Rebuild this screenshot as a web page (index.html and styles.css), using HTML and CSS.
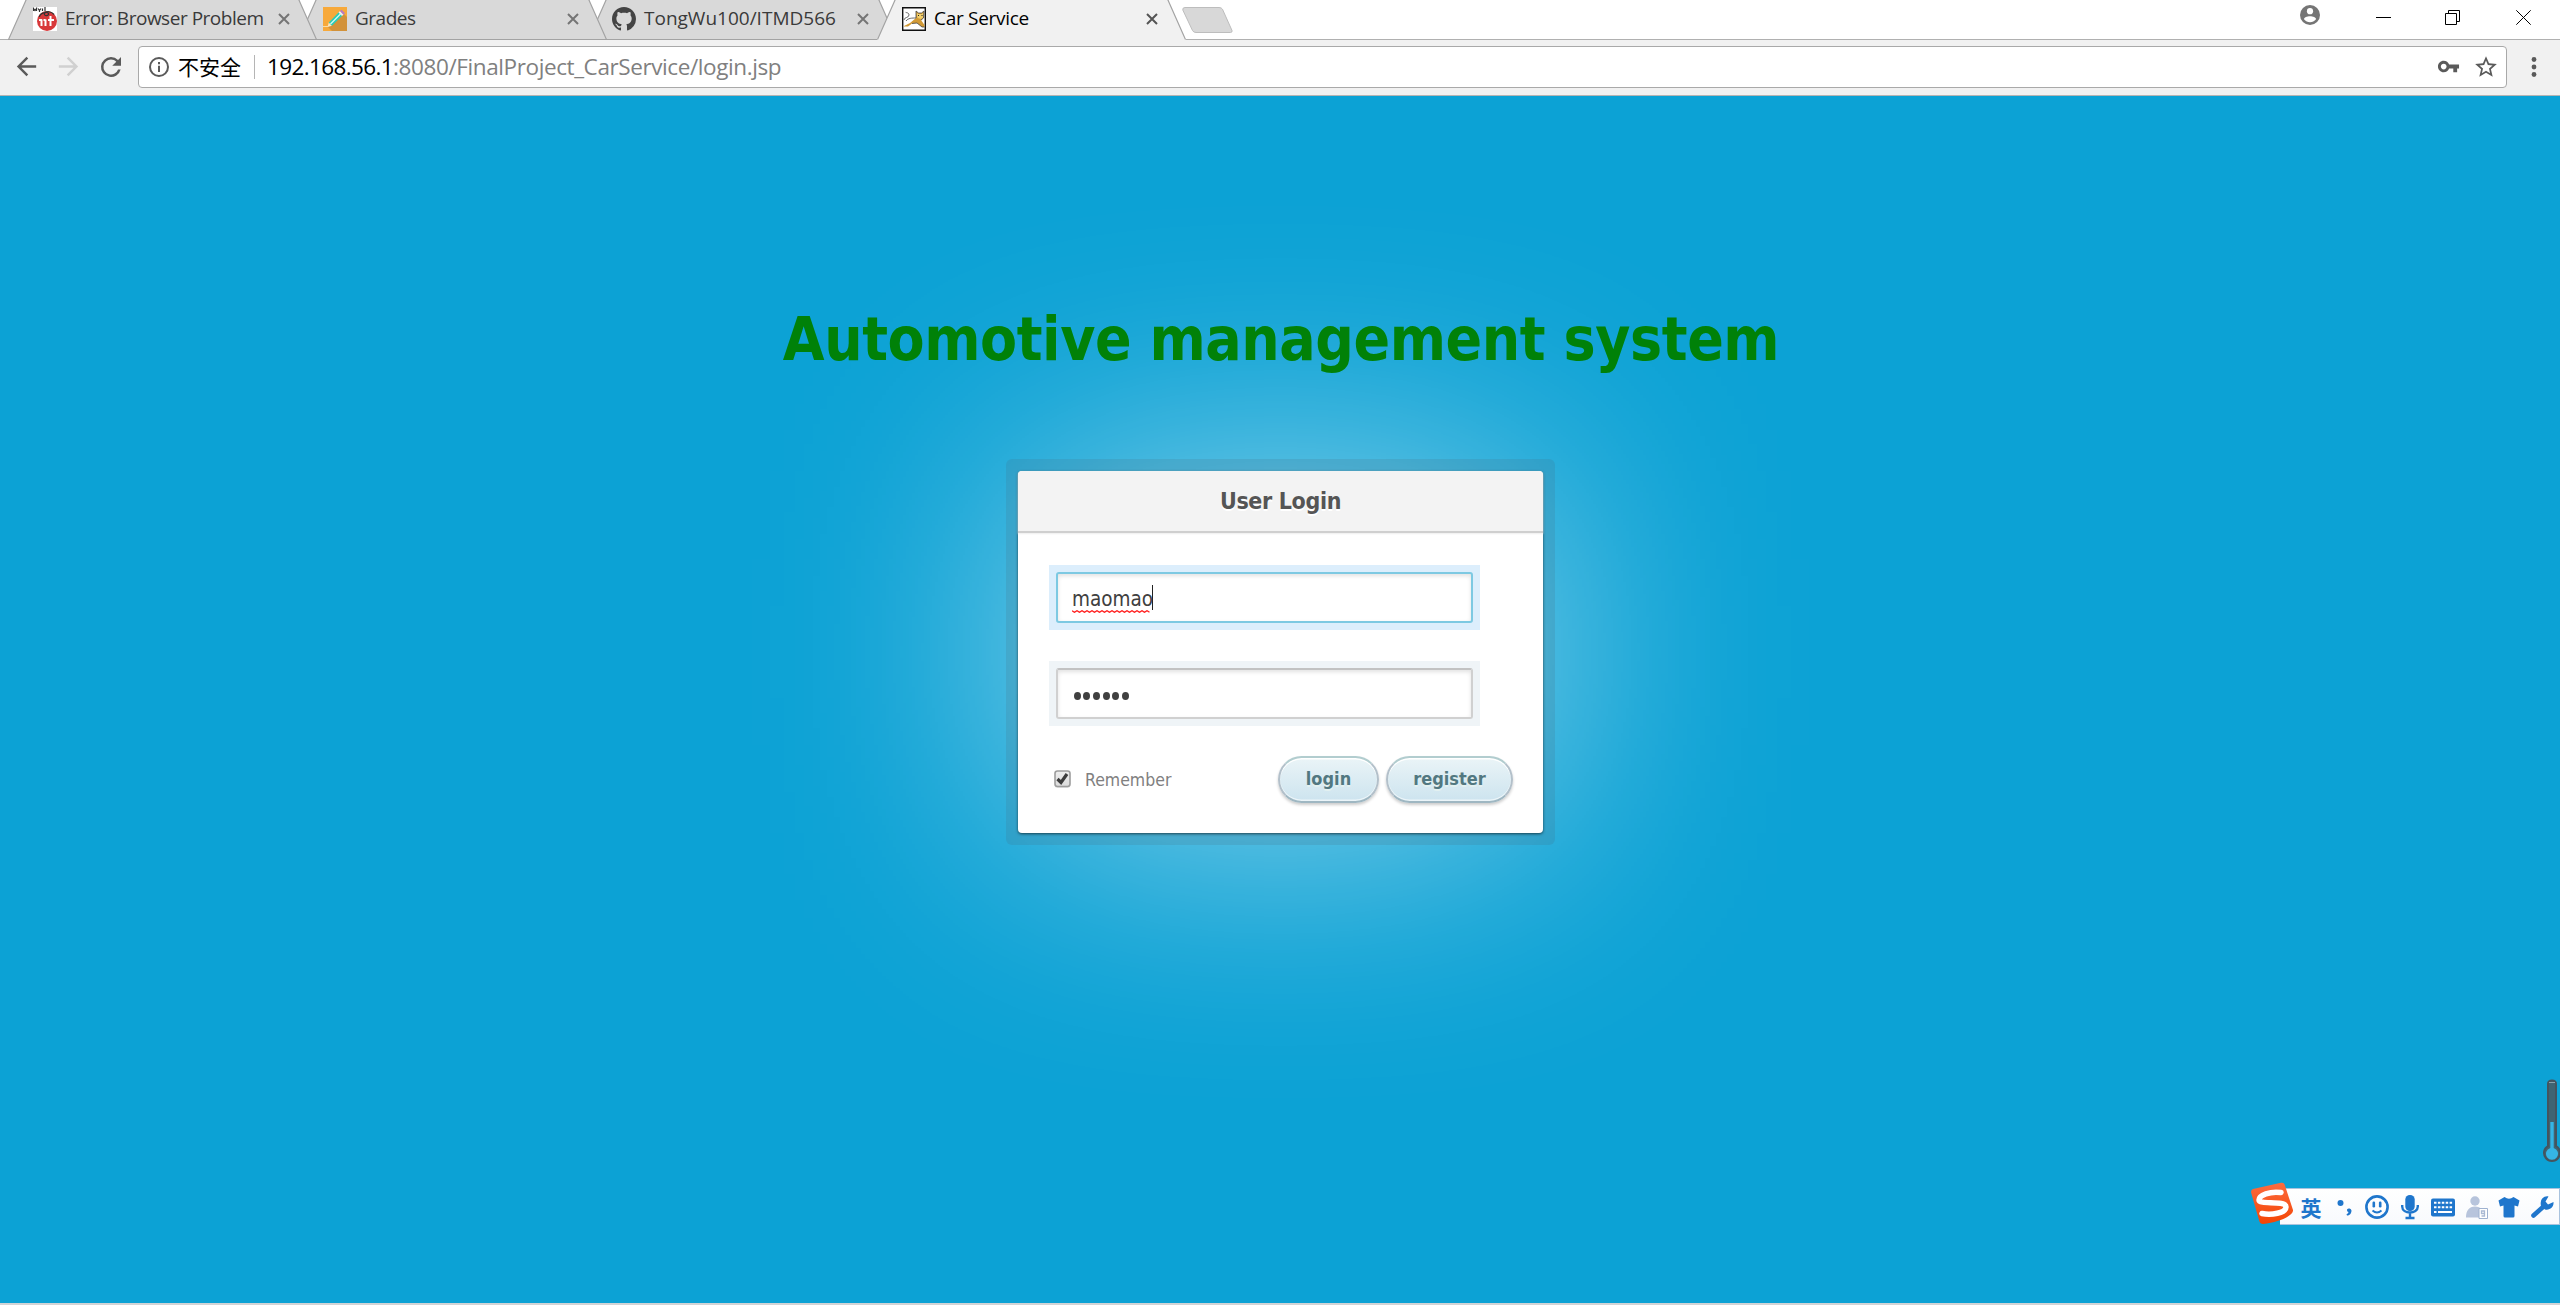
FILE: index.html
```html
<!DOCTYPE html>
<html lang="en">
<head>
<meta charset="utf-8">
<title>Car Service</title>
<link rel="stylesheet" href="styles.css">
</head>
<body>
<header class="tabstrip">
  <div class="tab tab-1">
    <svg class="shape" width="309" height="40" viewBox="0 0 309 40"><path d="M0.500 39.500L18.500 -1H290.500L308.500 39.500Z"/></svg>
    <svg class="favicon" width="24" height="24" viewBox="0 0 24 24"><path fill="#fff" d="M0 0h24v24H0z"/><circle cx="14" cy="14" r="10" fill="#d8383a"/><path fill="none" stroke="#fff" stroke-width="2" d="M8.500 12.500v6.500M12.500 12.500v6.500M17.500 9v10M6 13h3M10.500 13h2M15 13h6"/><path fill="none" stroke="#333" stroke-width="1.200" d="M.5 4V1.500l1.500 2 1.500-2V4M5 1.500l1.500 2L8 1.500M6.500 3.500V5M9.500 1.500v2.500M12 0v4.500M6.500 10c0-4 8-6 9-3.500s-5 3-4 0c2-3 7-2 9.500 1"/></svg>
    <span class="label">Error: Browser Problem</span>
    <svg class="close" width="14" height="14" viewBox="0 0 14 14"><path d="M2 2l10 10M12 2L2 12"/></svg>
  </div>
  <div class="tab tab-2">
    <svg class="shape" width="309" height="40" viewBox="0 0 309 40"><path d="M0.500 39.500L18.500 -1H290.500L308.500 39.500Z"/></svg>
    <svg class="favicon" width="24" height="24" viewBox="0 0 24 24"><path fill="#f7a93b" d="M0 0h24v24H0z"/><path fill="#d2923a" d="M21 7l3 3v14H9l-4-4z"/><path fill="#fbe6c0" d="M4.500 20l1.300-4.500 3.200 3.200z"/><path fill="#27cdb9" d="M5.800 15.500L16 5l3.500 3.500L9 18.700z"/><path stroke="#d9f8f2" stroke-width="1.300" d="M7.500 17L17.500 7"/><path fill="#eee" d="M15.500 5.500L17 4l3.500 3.500L19 9z"/><path fill="#b678c8" d="M17 4l1.500-1.200 3.500 3.400-1.500 1.500z"/><path stroke="#f9dca6" stroke-width="1" d="M0 19.500h5"/></svg>
    <span class="label">Grades</span>
    <svg class="close" width="14" height="14" viewBox="0 0 14 14"><path d="M2 2l10 10M12 2L2 12"/></svg>
  </div>
  <div class="tab tab-3">
    <svg class="shape" width="309" height="40" viewBox="0 0 309 40"><path d="M0.500 39.500L18.500 -1H290.500L308.500 39.500Z"/></svg>
    <svg class="favicon" width="24" height="24" viewBox="0 0 16 16"><path fill="#444" d="M8 0C3.580 0 0 3.580 0 8c0 3.540 2.290 6.530 5.470 7.590.4.070.55-.17.55-.38 0-.19-.01-.82-.01-1.490-2.010.37-2.530-.49-2.690-.94-.09-.23-.48-.94-.82-1.130-.28-.15-.68-.52-.01-.53.63-.01 1.080.58 1.230.82.72 1.210 1.870.87 2.330.66.07-.52.28-.87.51-1.070-1.780-.2-3.640-.89-3.640-3.950 0-.87.31-1.590.82-2.150-.08-.2-.36-1.020.08-2.120 0 0 .67-.21 2.200.82.64-.18 1.320-.27 2-.27s1.360.09 2 .27c1.530-1.040 2.200-.82 2.200-.82.44 1.100.16 1.920.08 2.120.51.56.82 1.270.82 2.150 0 3.070-1.870 3.750-3.650 3.950.29.25.54.73.54 1.480 0 1.070-.01 1.930-.01 2.200 0 .21.15.46.55.38A8.010 8.010 0 0 0 16 8c0-4.420-3.580-8-8-8z"/></svg>
    <span class="label">TongWu100/ITMD566</span>
    <svg class="close" width="14" height="14" viewBox="0 0 14 14"><path d="M2 2l10 10M12 2L2 12"/></svg>
  </div>
  <div class="tab tab-4 active">
    <svg class="shape" width="309" height="40" viewBox="0 0 309 40"><path class="fill" d="M0 40L18.500 -1H290.500L309 40Z"/><path class="edge" d="M0.500 39.500L18.500 -1M290.500 -1L308.500 39.500"/></svg>
    <svg class="favicon" width="24" height="24" viewBox="0 0 24 24"><path fill="#fff" stroke="#111" stroke-width="1.400" d="M.7.700h22.600v22.600H.7z"/><path fill="#d29a36" d="M2 19l6-3 6-5V4l2.500 2h3L22 4l-.5 7-2.500 2 3.500 5v2H20l-5-4-5 .500-4 3H2z"/><path fill="#f3cf6a" d="M14.500 6l2 1h3l2-1v4l-2.500 2-3.500-1z"/><path fill="none" stroke="#444" stroke-width=".8" d="M2 13c0-3 5-2 5-5S3 6 4 5M4 14c2-3 6-3 10-3V4l2.500 2h3L22 4l-.5 7-2.500 2M10 16.500l5-.500 5 4h2.500"/><path fill="#222" d="M16 8h1v1h-1zM19.500 8h1v1h-1z"/></svg>
    <span class="label">Car Service</span>
    <svg class="close" width="14" height="14" viewBox="0 0 14 14"><path d="M2 2l10 10M12 2L2 12"/></svg>
  </div>
  <svg class="newtab" width="56" height="30" viewBox="0 0 56 30"><path fill="#d8d8d8" stroke="#bdbdbd" d="M3 2.500H37Q39.500 2.500 40.500 4.300L50 25.500Q50.500 27.500 48.500 27.500H14Q11.500 27.500 10.500 25.500L.8 5Q.4 2.500 3 2.500Z"/></svg>
  <div class="window-controls">
    <svg width="22" height="22" viewBox="0 0 22 22"><circle cx="11" cy="11" r="10" fill="#757575"/><circle cx="11" cy="7.200" r="3.100" fill="#fff"/><path fill="#fff" d="M5 15.200c0-4 12-4 12 0-3 4-9 4-12 0z"/></svg>
    <svg width="15" height="15" viewBox="0 0 15 15"><path d="M0 7.500h15"/></svg>
    <svg width="15" height="15" viewBox="0 0 15 15"><path d="M.5 3.500h11v11H.5zM3.500 3V.5h11v11H12"/></svg>
    <svg width="15" height="15" viewBox="0 0 15 15"><path d="M.3.300l14.400 14.400M14.700.300L.3 14.700"/></svg>
  </div>
</header>
<nav class="toolbar">
  <svg class="nav" width="29" height="29" viewBox="0 0 24 24"><path d="M20 11H7.830l5.590-5.590L12 4l-8 8 8 8 1.410-1.410L7.830 13H20v-2z"/></svg>
  <svg class="nav disabled" width="29" height="29" viewBox="0 0 24 24"><path d="M12 4l-1.410 1.410L16.170 11H4v2h12.170l-5.580 5.590L12 20l8-8z"/></svg>
  <svg class="nav" width="30" height="30" viewBox="0 0 24 24"><path d="M17.650 6.350A7.960 7.960 0 0 0 12 4a8 8 0 1 0 7.730 10h-2.080A6 6 0 1 1 12 6c1.660 0 3.140.69 4.220 1.780L13 11h7V4l-2.350 2.350z"/></svg>
  <div class="omnibox">
    <svg class="info" width="22" height="22" viewBox="0 0 22 22"><circle cx="11" cy="11" r="9" fill="none" stroke="#5a5a5a" stroke-width="2"/><path fill="#5a5a5a" d="M10 6h2v2.200h-2zM10 9.800h2V16h-2z"/></svg>
    <span class="insecure">不安全</span>
    <span class="divider"></span>
    <span class="url"><span class="host">192.168.56.1</span><span class="path">:8080/FinalProject_CarService/login.jsp</span></span>
    <svg class="key" width="23" height="23" viewBox="0 0 24 24"><path d="M12.650 10C11.830 7.670 9.610 6 7 6c-3.310 0-6 2.690-6 6s2.690 6 6 6c2.610 0 4.830-1.670 5.650-4H17v4h4v-4h2v-4H12.650zM7 15c-1.650 0-3-1.350-3-3s1.350-3 3-3 3 1.350 3 3-1.350 3-3 3z"/></svg>
    <svg class="star" width="26" height="26" viewBox="0 0 24 24"><path d="M22 9.240l-7.190-.62L12 2 9.190 8.630 2 9.240l5.460 4.730L5.820 21 12 17.270 18.180 21l-1.630-7.030L22 9.240zM12 15.400l-3.760 2.270 1-4.280-3.320-2.880 4.380-.38L12 6.100l1.710 4.040 4.380.38-3.320 2.880 1 4.280L12 15.400z"/></svg>
  </div>
  <svg class="menu" width="6" height="22" viewBox="0 0 6 22"><circle cx="3" cy="3.500" r="2.400"/><circle cx="3" cy="11" r="2.400"/><circle cx="3" cy="18.500" r="2.400"/></svg>
</nav>
<main class="page">
  <h1>Automotive management system</h1>
  <form class="login-frame">
    <div class="login-card">
      <h2>User Login</h2>
      <div class="fields">
        <div class="ring focused"><div class="field"><span class="typed">maomao<svg class="squiggle" width="80" height="3" viewBox="0 0 80 3"><path d="M0 .7l2.500 1.600 2.500-1.600 2.500 1.600 2.500-1.600 2.500 1.600 2.500-1.600 2.500 1.600 2.500-1.600 2.500 1.600 2.500-1.600 2.500 1.600 2.500-1.600 2.500 1.600 2.500-1.600 2.500 1.600 2.500-1.600 2.500 1.600 2.500-1.600 2.500 1.600 2.500-1.600 2.500 1.600 2.500-1.600 2.500 1.600 2.500-1.600 2.500 1.600 2.500-1.600 2.500 1.600 2.500-1.600 2.500 1.600 2.500-1.600 2.500 1.600"/></svg></span><span class="caret"></span></div></div>
        <div class="ring"><div class="field"><span class="dot"></span><span class="dot"></span><span class="dot"></span><span class="dot"></span><span class="dot"></span><span class="dot"></span></div></div>
      </div>
      <div class="actions">
        <svg class="check" width="17" height="19" viewBox="0 0 17 19"><defs><linearGradient id="box" x2="0" y2="1"><stop stop-color="#eee"/><stop offset="1" stop-color="#dcdcdc"/></linearGradient></defs><rect x="1" y="2" width="15" height="16" rx="2.500" fill="#ccc" opacity=".5"/><rect x="1" y="1" width="15" height="15.500" rx="2.500" fill="url(#box)" stroke="#9d9d9d" stroke-width="1.600"/><path fill="none" stroke="#3d3d3d" stroke-width="3.200" d="M3.500 9l3.500 3.500L13 4"/></svg>
        <span class="remember">Remember</span>
        <button type="button" class="btn login">login</button>
        <button type="button" class="btn register">register</button>
      </div>
    </div>
  </form>
</main>
<footer class="edge-line"></footer>

<svg class="thermo" width="18" height="86" viewBox="0 0 18 86"><path fill="#3f6472" stroke="#45545e" stroke-width="2" d="M6 5q0-3.500 4-3.500t4 3.500V67a8 8 0 1 1-8 0z"/><path fill="#35b5e5" d="M8.300 43h3.400v26a6 6 0 1 1-3.400 0z"/><path stroke="#8ba3ad" d="M7 3.500h6"/></svg>

<div class="ime">
  <svg class="sogou" width="44" height="43" viewBox="0 0 44 43"><defs><linearGradient id="og" x2="0" y2="1"><stop stop-color="#fc6c40"/><stop offset="1" stop-color="#f44504"/></linearGradient></defs><path fill="url(#og)" d="M3 7L31 .8q3-.6 3.700 2L43 28c1 5-12 12-30 14q-3 0-3.700-3L1.200 11Q.5 8 3 7z"/><path fill="none" stroke="#fff" stroke-width="5.500" stroke-linecap="round" d="M31 10.500C20 9 9 13 9 18c0 5 27 0 27 7 0 6-15 8.500-24 6.500"/></svg>
  <span class="lang">英</span>
  <svg width="24" height="26" viewBox="0 0 24 26"><circle cx="8.500" cy="9" r="3" fill="#1f76cc"/><path fill="#1f76cc" d="M15 15.500a2.500 2.500 0 0 1 4.500 1c0 3-2 5-4.500 5l-.5-1.300q2-.6 2-2.200-2-.5-1.500-2.500z"/></svg>
  <svg width="24" height="26" viewBox="0 0 24 26"><circle cx="12" cy="13" r="10.600" fill="none" stroke="#1f76cc" stroke-width="2.600"/><rect x="7.500" y="7.500" width="2.600" height="6" rx="1.200" fill="#1f76cc"/><rect x="13.900" y="7.500" width="2.600" height="6" rx="1.200" fill="#1f76cc"/><path fill="none" stroke="#1f76cc" stroke-width="1.800" d="M7.500 16.500q4.500 4 9 0"/></svg>
  <svg width="24" height="26" viewBox="0 0 24 26"><rect x="7.300" y="1" width="9.400" height="16" rx="4.500" fill="#1f76cc"/><path fill="none" stroke="#1f76cc" stroke-width="2.400" d="M4.200 11v1.500c0 8 15.600 8 15.600 0V11M12 19v5M7.500 24h9"/></svg>
  <svg width="24" height="26" viewBox="0 0 24 26"><rect y="4.500" width="24" height="18" rx="2" fill="#1f76cc"/><path fill="none" stroke="#fff" stroke-width="2" stroke-dasharray="2.500 1.400" d="M3 8.800h18.500M3 13.300h18.500"/><path stroke="#fff" stroke-width="2" d="M3 18h2.500M7 18h14"/></svg>
  <svg width="24" height="26" viewBox="0 0 24 26"><circle cx="11" cy="7" r="4.700" fill="#b7c4dc"/><path fill="#b7c4dc" d="M2 23.500c0-7 3-11 9-11s9 4 9 11z"/><path fill="#fff" stroke="#9fb2d0" d="M15 14.500h8.500v10H15z"/><path fill="none" stroke="#a9b9d3" stroke-width="1.300" d="M20.500 19.500h-3v-2.500h3v5h-3"/></svg>
  <svg width="24" height="26" viewBox="0 0 24 26"><path fill="#1f76cc" d="M7.500 3q4.500 3.500 9 0l6 3.500-1.500 6-3.500-1V22q0 1.500-1.500 1.500H8Q6.500 23.500 6.500 22V11.500l-3.500 1-1.500-6z"/></svg>
  <svg width="24" height="26" viewBox="0 0 24 26"><path fill="none" stroke="#1f76cc" stroke-width="4.600" stroke-linecap="round" d="M3.500 21.500L13 13"/><path fill="#1f76cc" d="M18.500 2.500l-3 5 2.500 3 5.500-2.500c.5 5-3.500 8.500-8.500 7.500L11 12C9.500 6 13.500 1.500 18.500 2.500z"/></svg>
</div>
</body>
</html>
```
FILE: styles.css
```css
* { box-sizing: border-box; }
html, body { height: 100%; }
body {
  margin: 0;
  display: flex;
  flex-direction: column;
  overflow: hidden;
  background: #0ca2d5;
  font-family: "DejaVu Sans Condensed", "DejaVu Sans", sans-serif;
  font-stretch: condensed;
}
svg { display: block; flex: none; }

/* tab strip */
.tabstrip {
  flex: none;
  display: flex;
  height: 40px;
  padding-left: 8px;
  background: linear-gradient(#b0b0b0, #b0b0b0) bottom / 100% 1px no-repeat #fff;
  font-family: "Open Sans", "Noto Sans", sans-serif;
  font-stretch: normal;
  position: relative;
  z-index: 1;
}
.tab {
  position: relative;
  flex: none;
  display: flex;
  align-items: center;
  width: 309px;
  height: 40px;
  padding: 0 27px 2px 25px;
  font-size: 19px;
  line-height: 26px;
  color: #3a3a3a;
}
.tab-1 { z-index: 4; padding-right: 26px; }
.tab-2 { z-index: 3; margin-left: -19px; }
.tab-3 { z-index: 2; margin-left: -19px; padding-left: 24px; }
.tab-4 { z-index: 5; margin-left: -20px; }
.shape { position: absolute; left: 0; top: 0; z-index: -1; }
.shape path { fill: #d9d9d9; stroke: #a3a3a3; stroke-width: 1.200; }
.active .shape .fill { fill: #f1f1f1; stroke: none; }
.active .shape .edge { fill: none; }
.active { color: #000; }
.label { margin: -2px 0 0 8px; white-space: nowrap; }
.tab-1 .label { letter-spacing: -.48px; }
.tab-2 .label { letter-spacing: -.5px; }
.tab-4 .label { letter-spacing: -.3px; }
.close { margin-left: auto; stroke: #757575; stroke-width: 2; }
.active .close { stroke: #555; }
.newtab { margin: 5px 0 0 -4px; }
.window-controls {
  margin-left: auto;
  display: flex;
  align-items: flex-start;
  gap: 55px;
  padding: 10px 29px 0 0;
}
.window-controls svg { fill: none; stroke: #000; }
.window-controls svg:first-child { margin-top: -6px; stroke: none; }
.window-controls svg:nth-child(2) { margin-right: -1px; }
.window-controls svg:nth-child(3) { margin-right: 1px; }

/* toolbar */
.toolbar {
  flex: none;
  display: flex;
  align-items: center;
  height: 56px;
  padding: 0 23px 2px 12px;
  background: #f1f1f1;
  border-bottom: 1px solid #b4b4b4;
  font-family: "Open Sans", "Noto Sans", sans-serif;
  font-stretch: normal;
  position: relative;
  z-index: 1;
}
.nav { margin-right: 13px; fill: #5a5a5a; }
.nav:nth-child(3) { margin-right: 12px; }
.disabled { fill: #d0d0d0; }
.omnibox {
  flex: 1;
  display: flex;
  align-items: center;
  height: 42px;
  padding: 0 7px 0 9px;
  background: #fff;
  border: 1px solid #a9a9a9;
  border-radius: 4px;
  font-size: 22.5px;
  line-height: 30px;
}
.insecure { margin: -2px 0 0 8px; font-family: "Noto Sans CJK SC", sans-serif; font-size: 21px; }
.divider { width: 1px; height: 24px; margin: 0 12px 0 13px; background: #b5b5b5; }
.url { flex: 1; white-space: nowrap; }
.host { letter-spacing: -.62px; }
.path { letter-spacing: -.4px; color: #808080; }
.key, .star, .menu { fill: #5a5a5a; }
.star { margin-left: 13px; }
.menu { margin-left: 24px; }

/* login page */
.page {
  flex: 1;
  display: flex;
  flex-direction: column;
  align-items: center;
  background: #0ca2d5;
}
h1 {
  margin: 208px 0 0 2px;
  font-size: 60px;
  line-height: 70px;
  letter-spacing: -.42px;
  color: #008000;
  position: relative;
  z-index: 1;
  opacity: .96;
}
.login-frame {
  position: relative;
  width: 549px;
  height: 386px;
  margin: 85px 0 0 1px;
  padding: 12px;
  border-radius: 6px;
}
/* soft light behind the dialog, then the translucent rim over it */
.login-frame::before {
  content: "";
  position: absolute;
  inset: 12px;
  background: rgba(255, 255, 255, .56);
  filter: blur(128px);
}
.login-frame::after {
  content: "";
  position: absolute;
  inset: 0;
  border-radius: 6px;
  background: rgba(70, 100, 120, .17);
}
.login-card {
  position: relative;
  z-index: 1;
  height: 362px;
  background: #fff;
  border-radius: 4px;
  box-shadow: 0 1px 3px rgba(0, 0, 0, .6);
}
h2 {
  height: 62px;
  margin: 0;
  border-bottom: 2px solid #cfcfcf;
  border-radius: 4px 4px 0 0;
  background: #f3f3f3;
  box-shadow: 0 1px 2px #eee;
  font-size: 23px;
  line-height: 60px;
  letter-spacing: -.35px;
  text-align: center;
  color: #555;
  text-shadow: 0 2px 0 #fff;
}
.fields {
  display: flex;
  flex-direction: column;
  gap: 31px;
  padding: 32px 31px 0;
}
.ring { width: 431px; padding: 7px; background: #eff4f7; }
.field {
  display: flex;
  align-items: center;
  gap: 1.700px;
  height: 51px;
  padding-left: 15px;
  background: #fff;
  border: 2px solid #d0d0d0;
  border-top-color: #c2c2c2;
  border-radius: 3px;
  box-shadow: inset 0 2px 4px rgba(0, 0, 0, .12);
  font-size: 20.500px;
  line-height: 26px;
  color: #404040;
}
.focused { background: #dceefc; }
.focused .field { gap: 0; padding-left: 14px; border-color: #7dc9e2; }
.typed { position: relative; width: 80px; padding-top: 3px; }
.squiggle { position: absolute; left: 0; bottom: -1px; fill: none; stroke: #ff2020; stroke-width: 1.300; }
.caret { width: 1px; height: 25px; margin-top: -1px; background: #222; }
.dot { width: 7px; height: 8px; margin: 5px .5px 0; border-radius: 50%; background: #404040; }
.actions {
  display: flex;
  align-items: center;
  padding: 30px 30px 0 36px;
}
.check { margin-top: -1px; }
.remember { margin: 1px auto 0 14px; font-size: 17.500px; color: #808080; }
.btn {
  height: 47px;
  padding: 0 0 2px;
  border: 2px solid #b3c0cb;
  border-color: #b2cdcf #b3c0ca #9fb7c2;
  border-radius: 24px;
  background: linear-gradient(#eaf4f7, #cde4ef);
  box-shadow: inset 0 1.500px 0 #fff, inset 0 -1.500px 0 rgba(255, 255, 255, .6), 0 2px 3px rgba(0, 0, 0, .2);
  font: bold 18px "DejaVu Sans Condensed", "DejaVu Sans", sans-serif;
  font-stretch: condensed;
  color: #527881;
  text-shadow: 0 1.500px 0 #e3f1f1;
}
.login { width: 101px; margin-right: 7px; }
.register { width: 127px; }
.edge-line { flex: none; height: 2px; background: #d2d4d6; }

/* floating desktop widgets */
.thermo { position: absolute; left: 2542px; top: 1079px; }
.ime {
  position: absolute;
  left: 2250px;
  top: 1188px;
  display: flex;
  align-items: center;
  gap: 9px;
  width: 310px;
  height: 37px;
  padding-right: 5px;
  background: linear-gradient(#fff, #f8fafd) 30px 0 no-repeat;
}
.ime::before {
  content: "";
  position: absolute;
  inset: 0 0 0 30px;
  border: 1px solid #a9c3de;
  border-left: 0;
}
.sogou { position: relative; margin-top: -7px; margin-right: -4px; }
.lang {
  width: 24px;
  text-align: center;
  font: bold 21px/26px "Noto Sans CJK SC", sans-serif;
  color: #1f76cc;
}
```
